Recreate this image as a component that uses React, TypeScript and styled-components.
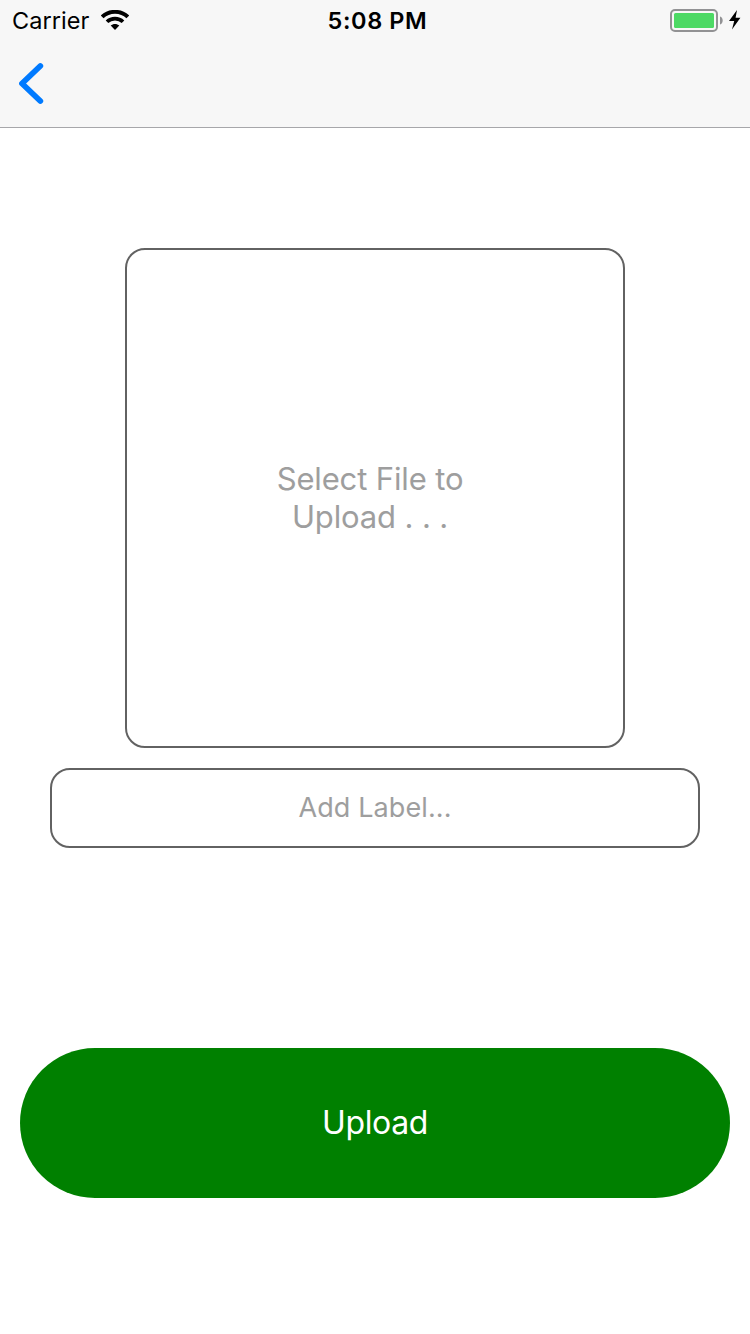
import React from 'react';
import styled, { createGlobalStyle } from 'styled-components';

const GlobalStyle = createGlobalStyle`
  * { box-sizing: border-box; }
  body {
    margin: 0;
    background: #fff;
    font-family: Inter, 'Liberation Sans', sans-serif;
  }
`;

const Screen = styled.div`
  display: flex;
  flex-direction: column;
  width: 750px;
  height: 1334px;
  background: #fff;
  overflow: hidden;
`;

const Header = styled.header`
  height: 128px;
  background: #f7f7f7;
  border-bottom: 1px solid #a7a7aa;
`;

const StatusBar = styled.div`
  display: grid;
  grid-template-columns: 1fr auto 1fr;
  align-items: center;
  height: 40px;
  padding: 1px 9px 0 12px;
  color: #000;
`;

const StatusGroup = styled.div<{ $end?: boolean }>`
  display: flex;
  align-items: center;
  justify-content: ${({ $end }) => ($end ? 'flex-end' : 'flex-start')};
`;

const Carrier = styled.span`
  margin-right: 12px;
  font-size: 23.5px;
  line-height: 39px;
  letter-spacing: 0.05px;
`;

const Clock = styled.time`
  padding-left: 2px;
  font-size: 23.5px;
  font-weight: 560;
  line-height: 39px;
  letter-spacing: 0.6px;
`;

const NavBar = styled.nav`
  display: flex;
  height: 87px;
  padding: 21px 0 0 17px;
`;

const BackButton = styled.button`
  display: flex;
  width: 30px;
  height: 44px;
  padding: 0;
  border: 0;
  background: none;
`;

const Content = styled.main`
  display: flex;
  flex-direction: column;
  align-items: center;
  padding: 120px 20px 0;
`;

const FilePicker = styled.button`
  display: flex;
  align-items: center;
  justify-content: center;
  width: 500px;
  height: 500px;
  padding: 0 10px 0 0;
  border: 2px solid #626262;
  border-radius: 20px;
  background: #fff;
  color: #9e9e9e;
  font-family: inherit;
  font-size: 31px;
  line-height: 38px;
  letter-spacing: -0.14px;
  text-align: center;
`;

const LabelField = styled.div`
  display: flex;
  align-items: center;
  justify-content: center;
  width: 650px;
  height: 80px;
  margin-top: 20px;
  border: 2px solid #626262;
  border-radius: 20px;
  color: #9e9e9e;
  font-size: 27px;
  line-height: 34px;
  letter-spacing: 0.1px;
`;

const UploadButton = styled.button`
  width: 710px;
  height: 150px;
  margin-top: 200px;
  padding: 0;
  border: 0;
  border-radius: 75px;
  background: #008000;
  color: #fff;
  font-family: inherit;
  font-size: 32px;
  line-height: 40px;
  letter-spacing: -0.4px;
`;

const WifiIcon = () => (
  <svg width="28" height="22" viewBox="0 0 28 22" fill="none" stroke="#000">
    <path d="M1.2 6.9C8.2 0.1 19.8 0.1 26.8 6.9" strokeWidth="3.9" />
    <path d="M6 11.8C10.4 7.5 17.6 7.5 22 11.8" strokeWidth="3.7" />
    <path d="M14 20L9.7 15.6C12 13.4 16 13.4 18.3 15.6Z" fill="#000" stroke="none" />
  </svg>
);

const BatteryIcon = () => (
  <svg width="59" height="23" viewBox="0 0 59 23">
    <rect x="1" y="1" width="46" height="21" rx="4" fill="none" stroke="#929294" strokeWidth="2" />
    <rect x="4" y="4" width="40" height="15" rx="1.5" fill="#4cd964" />
    <path d="M50 7.5C53.6 8.3 53.6 14.7 50 15.5Z" fill="#929294" />
  </svg>
);

const BoltIcon = () => (
  <svg width="12" height="22" viewBox="0 0 12 22">
    <path d="M8 0L0 11H5.2L3 19.6L11.4 7.8H6.6Z" fill="#000" />
  </svg>
);

const BackIcon = () => (
  <svg width="30" height="44" viewBox="0 0 30 44">
    <path
      d="M23.3 5L5 22.5L23.3 40"
      fill="none"
      stroke="#007aff"
      strokeWidth="5.8"
      strokeLinecap="round"
      strokeLinejoin="round"
    />
  </svg>
);

export default function App() {
  return (
    <Screen>
      <GlobalStyle />
      <Header>
        <StatusBar>
          <StatusGroup>
            <Carrier>Carrier</Carrier>
            <WifiIcon />
          </StatusGroup>
          <Clock>5:08 PM</Clock>
          <StatusGroup $end>
            <BatteryIcon />
            <BoltIcon />
          </StatusGroup>
        </StatusBar>
        <NavBar>
          <BackButton aria-label="Back">
            <BackIcon />
          </BackButton>
        </NavBar>
      </Header>
      <Content>
        <FilePicker>
          <span>
            Select File to
            <br />
            Upload . . .
          </span>
        </FilePicker>
        <LabelField>Add Label...</LabelField>
        <UploadButton>Upload</UploadButton>
      </Content>
    </Screen>
  );
}
